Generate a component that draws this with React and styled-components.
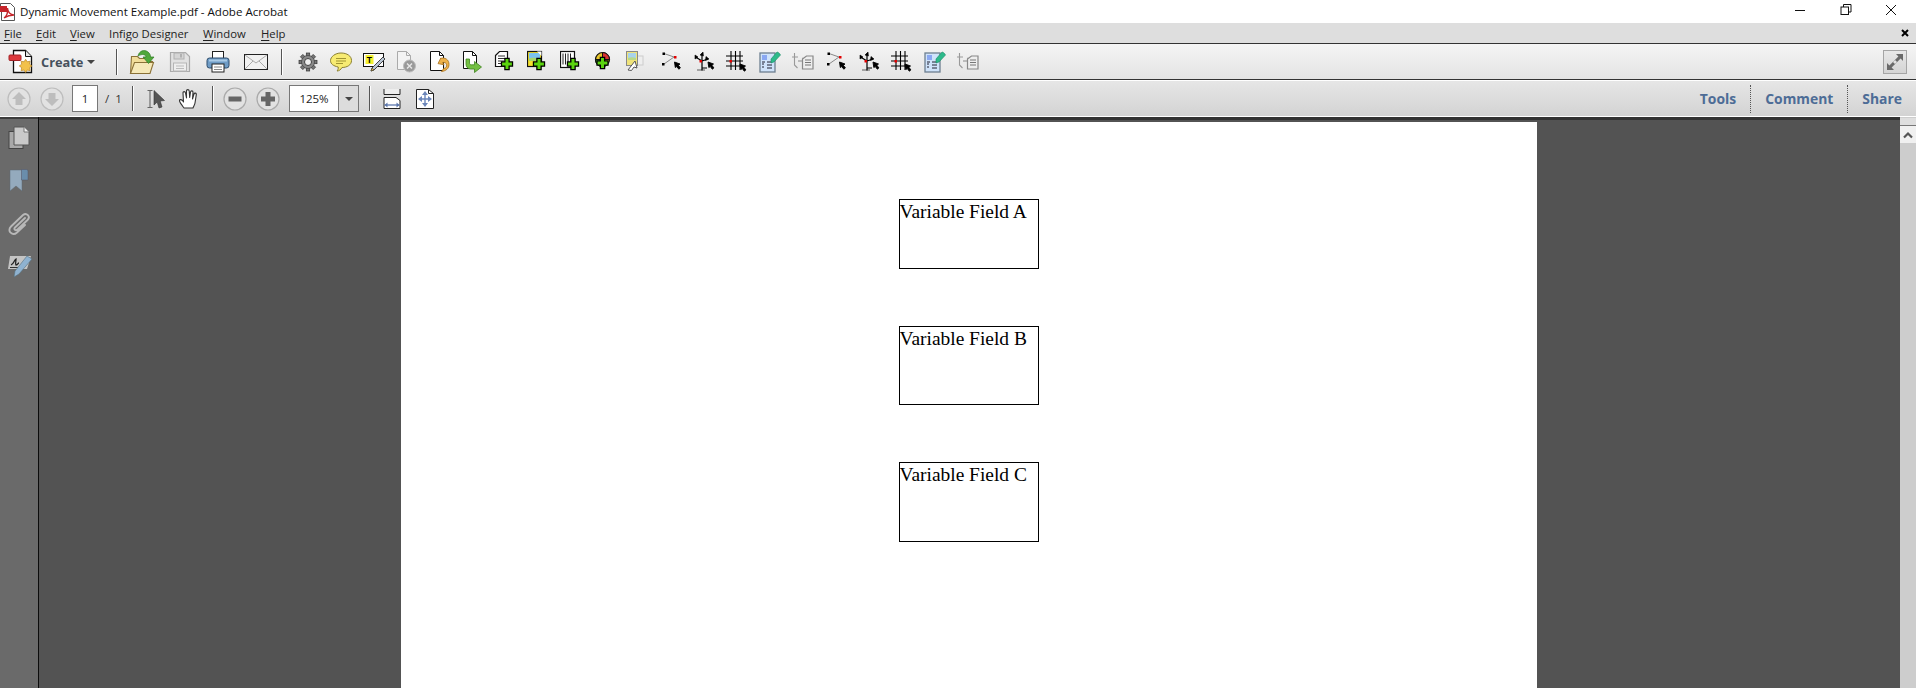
import React from "react";
import styled, { createGlobalStyle } from "styled-components";

const Global = createGlobalStyle`
  html, body { margin: 0; padding: 0; height: 100%; overflow: hidden; background: #fff; }
  #root { height: 100%; }
`;

const App_ = styled.div`
  height: 688px; width: 1916px; display: flex; flex-direction: column; overflow: hidden;
  font-family: "Open Sans", "Noto Sans", sans-serif; color: #111;
`;
const TitleBar = styled.div`
  height: 23px; background: #fff; display: flex; align-items: center; flex: none;
`;
const TitleText = styled.span`
  font-size: 11.55px; margin-left: 4px; color: #111; white-space: nowrap;
`;
const WinControls = styled.div`
  margin-left: auto; display: flex; align-items: flex-start; height: 100%;
`;
const WinButton = styled.div`
  width: 45.5px; height: 20px; display: flex; align-items: center; justify-content: center;
`;
const WinEnd = styled.div`
  width: 2px;
`;
const MenuBar = styled.div`
  height: 20px; background: #dedede; display: flex; align-items: center; flex: none; padding-left: 4px;
`;
const MenuItem = styled.span`
  font-size: 11.3px; color: #222; width: ${(p) => p.$w}px; white-space: nowrap;
  & u { text-underline-offset: 2px; }
`;
const MenuClose = styled.div`
  margin-left: auto; margin-right: 7px; display: flex;
`;
const MainBar = styled.div`
  height: 34px; padding-top: 1px; flex: none; display: flex; align-items: center; padding-left: 7px;
  border-top: 1px solid #333; border-bottom: 1px solid #333;
  background: linear-gradient(#f5f5f5, #e3e3e3);
`;
const NavBar = styled.div`
  height: 35px; flex: none; display: flex; align-items: center; padding-left: 7px;
  border-top: 1px solid #fff; border-bottom: 1px solid #fff;
  background: linear-gradient(#e6e6e6, #d3d3d3);
`;
const CreateButton = styled.div`
  width: 109px; display: flex; align-items: center;
`;
const CreateLabel = styled.span`
  font-size: 12.8px; font-weight: 700; color: #46505c; margin-left: 8px; width: 46px;
`;
const Sep = styled.div`
  width: 1px; height: ${(p) => p.$h || 26}px; background: #555; flex: none;
  margin-left: ${(p) => p.$ml || 0}px; margin-right: ${(p) => p.$mr || 0}px;
  box-shadow: 1px 0 0 #fff;
`;
const Slot = styled.div`
  width: ${(p) => p.$w}px; flex: none; display: flex; align-items: center; justify-content: center;
  margin-left: ${(p) => p.$ml || 0}px;
`;
const Ico = styled.svg`
  flex: none; display: block;
`;
const PageInput = styled.div`
  width: 24px; height: 25px; background: #fff; border: 1px solid #777;
  font-size: 11.5px; display: flex; align-items: center; justify-content: center; color: #222; flex: none;
  margin-left: 8px;
`;
const PageCount = styled.span`
  font-size: 11.5px; color: #333; width: 34px; flex: none; padding-left: 7px; box-sizing: border-box; white-space: pre;
`;
const Zoom = styled.div`
  width: 68px; height: 25px; border: 1px solid #777; display: flex; flex: none; margin-left: 9px; background: #fff;
`;
const ZoomValue = styled.div`
  width: 48px; font-size: 11.5px; display: flex; align-items: center; justify-content: center; color: #222;
`;
const ZoomArrow = styled.div`
  flex: 1; background: #dcdcdc; border-left: 1px solid #777; display: flex; align-items: center; justify-content: center;
`;
const Caret = styled.span`
  display: inline-block; border-left: 4px solid transparent; border-right: 4px solid transparent;
  border-top: 4px solid #444;
`;
const RightTabs = styled.div`
  margin-left: auto; display: flex; align-items: center; height: 100%;
`;
const Tab = styled.span`
  font-size: 13.9px; font-weight: 700; color: #4d6c96; display: flex; align-items: center; height: 28px;
  padding: 0 14px; white-space: nowrap;
  border-left: ${(p) => (p.$first ? "none" : "1px dotted #555")};
`;
const Expand = styled.div`
  margin-left: auto; margin-right: 9px; width: 22px; height: 22px; border: 1px solid #a5a5a5;
  background: linear-gradient(#e8e8e8, #d4d4d4); display: flex; align-items: center; justify-content: center;
`;
const Main = styled.div`
  flex: 1; display: flex; min-height: 0;
`;
const Sidebar = styled.div`
  width: 38px; flex: none; background: #6a6a6a; border-right: 1px solid #0c0c0c;
  display: flex; flex-direction: column; align-items: center; padding-top: 9px; gap: 18px;
  box-shadow: inset 0 2px 0 #3c3c3c;
`;
const Viewer = styled.div`
  flex: 1; background: #535353; box-shadow: inset 0 3px 0 #333; padding: 5px 2px 0 0; display: flex;
  justify-content: center; overflow: hidden;
`;
const Page = styled.div`
  width: 1136px; background: #fff; display: flex; flex-direction: column; align-items: center;
  padding-top: 77px; box-sizing: border-box; height: 600px; flex: none;
`;
const Field = styled.div`
  width: 140px; height: ${(p) => p.$h}px; box-sizing: border-box; border: 1px solid #000; flex: none;
  margin-bottom: 57px; font-family: "Liberation Serif", serif; font-size: 19.45px; line-height: 23px;
  color: #000; white-space: nowrap;
`;
const Scrollbar = styled.div`
  width: 16px; flex: none; background: #cdcdcd; display: flex; flex-direction: column;
`;
const ScrollCap = styled.div`
  height: 7px; background: #dedede; border-bottom: 1px solid #777; margin-top: 1px;
`;
const ScrollButton = styled.div`
  height: 17px; background: #f0f0f0; display: flex; align-items: center; justify-content: center;
`;

const I = ({ s = 24, dx = 0, children }) => (
  <Ico width={s} height={s} viewBox={`${-dx} 0 ${s} ${s}`}>{children}</Ico>
);

const Plus = ({ x = 14, y = 14 }) => (
  <path transform={`translate(${x} ${y}) scale(.85)`} d="M-2.500-6.500h5v4h4v5h-4v4h-5v-4h-4v-5h4z" fill="#5bd40f" stroke="#000" strokeWidth="1.500" />
);
const Cur = ({ x, y }) => (
  <path transform={`translate(${x} ${y})`} d="M0 0l5.500 2-1.600 1.300 2 2.600-1.600 1.300-2-2.600L.8 5.500z" fill="#000" stroke="#000" strokeWidth=".9" />
);

const PdfLogo = () => (
  <Ico width="16" height="18" viewBox="0 0 16 18">
    <path d="M.5 3.500V.5h10l4 4v13H1.500V9" fill="#fff" stroke="#555" />
    <rect x="0" y="3" width="7" height="6" fill="#c5252b" />
    <path d="M4 15c3-2 4-6 3.500-10 0 4 3 7 6.500 7-4 0-7 1-10 3z" fill="none" stroke="#c5252b" strokeWidth="1.400" />
  </Ico>
);
const MinGlyph = () => <Ico width="12" height="12" viewBox="0 0 12 12"><path d="M1 6.500h10" stroke="#111" /></Ico>;
const RestoreGlyph = () => (
  <Ico width="12" height="12" viewBox="0 0 12 12">
    <path d="M3.500 3V.5h7.500v7.500H8.500" fill="none" stroke="#111" />
    <rect x="1" y="3" width="7.500" height="7.500" fill="none" stroke="#111" />
  </Ico>
);
const CloseGlyph = () => <Ico width="12" height="12" viewBox="0 0 12 12"><path d="M1 1l10 10M11 1L1 11" stroke="#111" /></Ico>;
const SmallX = () => <Ico width="8" height="8" viewBox="0 0 8 8"><path d="M1 1l6 6M7 1L1 7" stroke="#000" strokeWidth="2" /></Ico>;

const CreateIcon = () => (
  <I s={26}>
    <path d="M6.500 1.500h12l6 6v16h-18z" fill="#fff" stroke="#111" strokeWidth="1.300" />
    <path d="M18.500 1.500v6h6" fill="#e5e5e5" stroke="#111" />
    <rect x="2" y="6" width="12" height="5.500" rx="1" fill="#dd3a3e" stroke="#a42226" />
    <path d="M19 12l1.600 2.600 3-.6-.6 3 2.500 1.800-2.500 1.800.6 3-3-.6-1.600 2.600-1.600-2.600-3 .6.600-3-2.500-1.800 2.500-1.800-.6-3 3 .6z" fill="#f2c14a" stroke="#b98322" strokeWidth=".7" transform="translate(0 -1.500) scale(.98)" />
  </I>
);
const OpenIcon = () => (
  <I s={26}>
    <path d="M1.500 24.500l1-17h6l2 2h8v3h5l-3 12z" fill="#f1dd9a" stroke="#8b7238" strokeWidth="1.100" />
    <path d="M1.500 24.500l4-11h19l-3.500 11z" fill="#f6e9b8" stroke="#8b7238" strokeWidth="1.100" />
    <path d="M9 7c1-5 6-7 10-4 2 1.500 2.500 3.500 2.500 5H25l-5.500 6.500L14 8h3c0-2.500-4-3.500-8-1z" fill="#4fa83a" stroke="#2f7d22" strokeWidth=".7" />
  </I>
);
const SaveIcon = () => (
  <I s={22}>
    <path d="M1.500 1.500h15l4 4v15h-19z" fill="#e2e2e2" stroke="#aaa" strokeWidth="1.200" />
    <rect x="5" y="2" width="10" height="6" fill="#d5d5d5" stroke="#b0b0b0" />
    <rect x="11" y="3" width="2" height="3.500" fill="#b0b0b0" />
    <rect x="4.500" y="12" width="13" height="8" fill="#eee" stroke="#b5b5b5" />
    <path d="M7 15h8M7 17.500h8" stroke="#bbb" />
  </I>
);
const PrintIcon = () => (
  <I s={24}>
    <rect x="6.500" y="1.500" width="11" height="8" fill="#fff" stroke="#222" />
    <rect x="1" y="8" width="22" height="10" rx="2.500" fill="#6f9cc6" stroke="#2e4d6c" />
    <rect x="3" y="9.500" width="18" height="2" fill="#a9cae6" />
    <rect x="6" y="14" width="12" height="8" fill="#fff" stroke="#222" />
    <path d="M8 17h8M8 19.500h8" stroke="#888" />
  </I>
);
const MailIcon = () => (
  <I s={26}>
    <rect x="1.500" y="5.500" width="23" height="15" fill="#f1f1f1" stroke="#222" />
    <path d="M2 6l11 8 11-8M2 20l8-8M24 20l-8-8" fill="none" stroke="#aaa" />
  </I>
);
const Gear = () => {
  const teeth = [0, 45, 90, 135, 180, 225, 270, 315];
  return (
    <I>
      {teeth.map((a) => (
        <rect key={a} x="10.300" y="3" width="3.400" height="4" fill="#777" stroke="#333" strokeWidth=".7" transform={`rotate(${a} 12 12)`} />
      ))}
      <circle cx="12" cy="12" r="6.500" fill="#8a8a8a" stroke="#444" strokeWidth=".8" />
      <circle cx="12" cy="12" r="3.500" fill="#f0f0f0" stroke="#333" strokeWidth=".9" />
    </I>
  );
};
const CommentIcon = () => (
  <I>
    <path d="M12 3c6 0 10.500 3 10.500 7.500S18 17.500 13 17.500c-1 2-3 3.500-5 3.500 1-1 1.500-2.500 1.200-4C4.500 16 1.500 14 1.500 10.500S6 3 12 3z" fill="#f7eb72" stroke="#8b8030" />
    <path d="M7 8.500h10M7 11h10M7 13.500h7" stroke="#a19532" />
  </I>
);
const NoteIcon = () => (
  <I>
    <rect x="1.500" y="3.500" width="20" height="13" fill="#fff" stroke="#111" />
    <rect x="3.500" y="5" width="8" height="9" fill="#f4f02e" />
    <text x="4.800" y="12.500" fontSize="8.500" fontFamily="Liberation Sans" fontWeight="700" fill="#000">T</text>
    <path d="M21 7l2 2-11 11-3 1 1-3z" fill="#b9c6d4" stroke="#333" strokeWidth=".9" />
    <path d="M10 18l-1 3 3-1z" fill="#e9b93a" stroke="#333" strokeWidth=".5" />
  </I>
);
const PageX = () => (
  <I dx={-1}>
    <path d="M3.500 1.500h9l4 4v14h-13z" fill="#f3f3f3" stroke="#aaa" />
    <path d="M12.500 1.500v4h4" fill="none" stroke="#aaa" />
    <circle cx="15.500" cy="16" r="6" fill="#999" stroke="#bbb" />
    <path d="M13 13.500l5 5M18 13.500l-5 5" stroke="#e8e8e8" strokeWidth="1.400" />
  </I>
);
const PageBack = () => (
  <I dx={-1}>
    <path d="M3.500 1.500h9l4 4v15h-13z" fill="#fff" stroke="#111" />
    <path d="M12.500 1.500v4h4" fill="none" stroke="#111" />
    <path d="M13 8.500c5-1.500 9 1 9 6 0 4-3 6.500-7.500 7l2.200-3c2.200-.2 3.300-1.800 3-3.700-.3-2-2.300-2.800-4.200-2.300l1.500 2.300-6-1.200 2.500-5z" fill="#eeb24b" stroke="#a8701c" strokeWidth=".8" />
  </I>
);
const PageFwd = () => (
  <I dx={-1}>
    <path d="M3.500 1.500h9l4 4v13h-13z" fill="#fff" stroke="#111" />
    <path d="M12.500 1.500v4h4" fill="none" stroke="#111" />
    <path d="M6 10.500h3.500v4c0 1.200.8 1.800 2 1.800h3V13l7 5.500-7 5.500v-3.500h-4C7.500 20.500 6 18 6 15.500z" fill="#74c043" stroke="#3f8320" strokeWidth=".8" transform="translate(0 -1.500)" />
  </I>
);
const AddDoc = () => (
  <I dx={-1}>
    <path d="M2.500 5.500l4-4h8v15h-12z" fill="#fff" stroke="#111" strokeWidth="1.200" />
    <path d="M5 6h7M5 8.500h7M5 11h6M5 13.500h4" stroke="#333" />
    <Plus x={14} y={14} />
  </I>
);
const AddImage = () => (
  <I dx={-1}>
    <rect x="1.500" y="1.500" width="14" height="15" fill="#f5e12d" stroke="#111" strokeWidth="1.200" />
    <rect x="3" y="3" width="11" height="6" fill="#7cc3ee" />
    <path d="M3 9c3-2 6-1 11 0v2H3z" fill="#a8d66a" />
    <path d="M11 1.500h4.500V6z" fill="#fff" />
    <Plus x={13} y={14} />
  </I>
);
const AddTable = () => (
  <I dx={-1}>
    <rect x="1.500" y="1.500" width="14" height="16" fill="#fff" stroke="#111" strokeWidth="1.200" />
    <path d="M4 3.500v11M6.500 3.500v11M9 3.500v11M11.500 3.500v8" stroke="#222" />
    <Plus x={14} y={14} />
  </I>
);
const AddChart = () => (
  <I dx={-2}>
    <circle cx="11.500" cy="9.500" r="7" fill="#e8c62a" stroke="#111" strokeWidth="1.200" />
    <path d="M11.500 9.500v-7a7 7 0 0 1 7 7z" fill="#d93030" stroke="#111" />
    <path d="M11.500 9.500l5 5a7 7 0 0 1-12-5z" fill="#3fa13a" stroke="#111" />
    <Plus x={11.500} y={13} />
  </I>
);
const ImageDrag = () => (
  <I dx={-3}>
    <rect x="12" y="6" width="8" height="9" fill="#eee" stroke="#ccc" />
    <rect x="3.500" y="1.500" width="11" height="14" fill="#efe37a" stroke="#888" />
    <rect x="5" y="3" width="8" height="5" fill="#a9d3ea" />
    <path d="M5 8c3-1 5-1 8 0v2H5z" fill="#b8d988" />
    <path d="M5 20l7-9 2 7-3-1-2.500 3.500z" fill="#fff" stroke="#555" />
  </I>
);
const Lines = () => (
  <I s={24} dx={2}>
    <path d="M3 3.500l10 3.500M3 14l10-7" stroke="#888" fill="none" />
    <rect x="1.500" y="2.500" width="2.500" height="2.500" fill="#000" />
    <rect x="1" y="13" width="2.500" height="2.500" fill="#000" />
    <rect x="13" y="6" width="2.500" height="2.500" fill="#e10000" />
    <Cur x={13.500} y={12} />
  </I>
);
const Axes = () => (
  <I s={24} dx={2}>
    <path d="M8 3.500v17M8 11L1.500 7M8 11l6-2M8 18h5" stroke="#000" strokeWidth="1.200" fill="none" />
    <path d="M6 5l3-3 .4 4zM1 9V5l3 2zM12 6.500l3 2.500-3.500 1.500zM3 20h8" fill="#000" stroke="#000" strokeWidth=".6" />
    <rect x="5.500" y="10" width="2.500" height="2.500" fill="#e10000" />
    <Cur x={14} y={12} />
  </I>
);
const Grid = () => (
  <I s={24}>
    <path d="M1 6h17M1 11h17M1 16h17M6 1v19M10.500 1v19M15 1v19" stroke="#000" strokeWidth="1.100" fill="none" />
    <rect x="4.500" y="10" width="2.500" height="2.500" fill="#e10000" />
    <Cur x={15} y={14} />
  </I>
);
const FormEdit = () => (
  <I s={24}>
    <rect x="2" y="3" width="15" height="19" fill="#cfe3fa" stroke="#6d7f90" strokeWidth="1.300" />
    <rect x="4" y="5" width="5" height="5" fill="#8aa8f2" />
    <path d="M4 12h3M4 14h2M4 17h2M9 12h5M9 15h5M9 18h5" stroke="#223" />
    <path d="M13 9l6-7c1 0 3 1.500 3.500 3l-6.500 7-3 1z" fill="#2dba8b" stroke="#1d8c67" strokeWidth=".6" />
  </I>
);
const TextMove = () => (
  <I s={24}>
    <path d="M3.500 3v12l3 3M1 7h6" stroke="#999" fill="none" strokeWidth="1.100" />
    <path d="M7 10h4V7l3 4-3 4v-3H7z" fill="#bbb" />
    <path d="M11.500 9l4-3h6.500v13H11.500z" fill="#eee" stroke="#888" strokeWidth="1.200" />
    <path d="M14 10h6M14 12.500h6M14 15h6" stroke="#777" />
  </I>
);

const Round = ({ dir, dim }) => (
  <Ico width="24" height="24" viewBox="0 0 24 24">
    <circle cx="12" cy="12" r="11" fill="#e2e2e2" stroke={dim ? "#bdbdbd" : "#aaa"} strokeWidth="1.200" />
    {dir === "up" && <path d="M12 5l7 7h-3.500v6h-7v-6H5z" fill={dim ? "#bdbdbd" : "#777"} />}
    {dir === "down" && <path d="M12 19l-7-7h3.500V6h7v6H19z" fill={dim ? "#bdbdbd" : "#777"} />}
    {dir === "minus" && <rect x="5.500" y="9.500" width="13" height="5" fill="#666" />}
    {dir === "plus" && <path d="M9.500 5h5v4.500H19v5h-4.500V19h-5v-4.500H5v-5h4.500z" fill="#666" />}
  </Ico>
);
const SelectIcon = () => (
  <I s={20}>
    <path d="M.5 1.500h5M.5 18.500h5M3 1.500v17" stroke="#666" strokeWidth="1.100" fill="none" />
    <path d="M7 1.500l10.500 10-4.300.5 1.800 6-3 1-1.800-6L7 16z" fill="#555" stroke="#333" strokeWidth=".6" />
  </I>
);
const HandIcon = () => (
  <I s={21}>
    <path d="M5 20c-1.500-2-4-5-4.500-7-.3-1.500 1.500-2 3-.5l1 1.500L4 5c0-1.800 2.200-1.800 2.500 0l1 5V3c0-1.800 2.500-1.800 2.700 0l.5 6.500L11.500 4c.3-1.700 2.500-1.500 2.500.3L13.500 11l1.500-5c.5-1.500 2.500-1 2.300.7L16 15c-.3 2-1.500 3.500-2 5z" fill="#fff" stroke="#333" strokeWidth="1.100" strokeLinejoin="round" />
  </I>
);
const FitWidth = () => (
  <I>
    <path d="M4 2v5.500h16V2" fill="#eee" stroke="#222" />
    <path d="M4 10.500h12l4 3v8H4z" fill="#fff" stroke="#222" />
    <path d="M4.500 18h15" stroke="#5d78ad" strokeWidth="1.300" />
    <path d="M4.500 18l3-2.500v5zM19.500 18l-3-2.500v5z" fill="#5d78ad" />
  </I>
);
const FitPage = () => (
  <I>
    <path d="M3.500 2.500h12l5 4v15h-17z" fill="#fff" stroke="#222" />
    <path d="M15.500 2.500v4h5" fill="none" stroke="#222" />
    <path d="M12 6v12M6.500 12h11" stroke="#6b86ba" strokeWidth="1.400" />
    <path d="M12 4L9 8h6zM12 20l-3-4h6zM5 12l4-3v6zM19 12l-4-3v6z" fill="#6b86ba" />
  </I>
);
const ExpandIcon = () => (
  <Ico width="20" height="20" viewBox="0 0 20 20">
    <path d="M11 2h7v7l-2.400-2.400L6.600 15.600 9 18H2v-7l2.400 2.400 9-9z" fill="#6a6a6a" />
    <path d="M9 9l2 2" stroke="#e2e2e2" strokeWidth="3" />
  </Ico>
);
const PagesIcon = () => (
  <Ico width="22" height="24" viewBox="0 0 22 24">
    <rect x="1" y="5.500" width="14" height="17" fill="#a9a9a9" stroke="#444" />
    <path d="M6 1h10l5 5v13H6z" fill="#c9c9c9" stroke="#555" />
    <path d="M16 1v5h5" fill="#eee" stroke="#777" />
  </Ico>
);
const BookmarkIcon = () => (
  <Ico width="20" height="25" viewBox="0 0 20 25">
    <path d="M1 2h12v21l-6-5-6 5z" fill="#94aabd" stroke="#5e6a74" strokeWidth=".5" />
    <path d="M12.500 1.500h5q1.500 0 1.500 1.500V12h-6.500z" fill="#6a8dab" stroke="#556" strokeWidth=".5" />
  </Ico>
);
const ClipIcon = () => (
  <Ico width="24" height="25" viewBox="0 0 24 25">
    <path d="M18 7L8 16.500c-1.800 1.800 .6 3.800 2.500 2L20.500 9c3.500-3.500-1-8-4.500-5L4 15.500c-4.500 4.500 1.500 10 6 6l8-7.500" fill="none" stroke="#b8b8b8" strokeWidth="1.900" strokeLinecap="round" />
  </Ico>
);
const SignIcon = () => (
  <Ico width="25" height="26" viewBox="0 0 25 26">
    <path d="M3 2h21l-4 13H1z" fill="#c4c4c4" />
    <path d="M4 11c3-1 3-5 5-6 0 3-1 5 0 6 2 0 2-2 3-2" fill="none" stroke="#222" strokeWidth="1.300" />
    <path d="M3 13.500h10" stroke="#333" />
    <path d="M20 2l5 3-13 15-5 3 1-6z" fill="#8fb2d0" stroke="#56707f" strokeWidth=".6" />
  </Ico>
);
const ScrollUp = () => (
  <Ico width="10" height="8" viewBox="0 0 10 8"><path d="M1 6.500l4-4 4 4" fill="none" stroke="#555" strokeWidth="2.200" /></Ico>
);

const tools = [Gear, CommentIcon, NoteIcon, PageX, PageBack, PageFwd, AddDoc, AddImage, AddTable, AddChart, ImageDrag, Lines, Axes, Grid, FormEdit, TextMove, Lines, Axes, Grid, FormEdit, TextMove];

export default function App() {
  return (
    <App_>
      <Global />
      <TitleBar>
        <PdfLogo />
        <TitleText>Dynamic Movement Example.pdf - Adobe Acrobat</TitleText>
        <WinControls>
          <WinButton><MinGlyph /></WinButton>
          <WinButton><RestoreGlyph /></WinButton>
          <WinButton><CloseGlyph /></WinButton>
          <WinEnd />
        </WinControls>
      </TitleBar>
      <MenuBar>
        <MenuItem $w={32}><u>F</u>ile</MenuItem>
        <MenuItem $w={34}><u>E</u>dit</MenuItem>
        <MenuItem $w={39}><u>V</u>iew</MenuItem>
        <MenuItem $w={94}>Infigo Designer</MenuItem>
        <MenuItem $w={58}><u>W</u>indow</MenuItem>
        <MenuItem $w={40}><u>H</u>elp</MenuItem>
        <MenuClose><SmallX /></MenuClose>
      </MenuBar>
      <MainBar>
        <CreateButton>
          <CreateIcon />
          <CreateLabel>Create</CreateLabel>
          <Caret />
        </CreateButton>
        <Sep />
        <Slot $w={38} $ml={6}><OpenIcon /></Slot>
        <Slot $w={38}><SaveIcon /></Slot>
        <Slot $w={38}><PrintIcon /></Slot>
        <Slot $w={38}><MailIcon /></Slot>
        <Sep $ml={6} $mr={9} />
        {tools.map((T, i) => (
          <Slot $w={33} key={i}><T /></Slot>
        ))}
        <Expand><ExpandIcon /></Expand>
      </MainBar>
      <NavBar>
        <Slot $w={24}><Round dir="up" dim /></Slot>
        <Slot $w={24} $ml={9}><Round dir="down" dim /></Slot>
        <PageInput>1</PageInput>
        <PageCount>/  1</PageCount>
        <Sep $h={25} />
        <Slot $w={20} $ml={14}><SelectIcon /></Slot>
        <Slot $w={22} $ml={11}><HandIcon /></Slot>
        <Sep $h={25} $ml={12} $mr={10} />
        <Slot $w={24}><Round dir="minus" /></Slot>
        <Slot $w={24} $ml={9}><Round dir="plus" /></Slot>
        <Zoom>
          <ZoomValue>125%</ZoomValue>
          <ZoomArrow><Caret /></ZoomArrow>
        </Zoom>
        <Sep $h={25} $ml={10} $mr={10} />
        <Slot $w={24}><FitWidth /></Slot>
        <Slot $w={24} $ml={9}><FitPage /></Slot>
        <RightTabs>
          <Tab $first>Tools</Tab>
          <Tab>Comment</Tab>
          <Tab>Share</Tab>
        </RightTabs>
      </NavBar>
      <Main>
        <Sidebar>
          <PagesIcon />
          <BookmarkIcon />
          <ClipIcon />
          <SignIcon />
        </Sidebar>
        <Viewer>
          <Page>
            <Field $h={70}>Variable Field A</Field>
            <Field $h={79}>Variable Field B</Field>
            <Field $h={80}>Variable Field C</Field>
          </Page>
        </Viewer>
        <Scrollbar>
          <ScrollCap />
          <ScrollButton><ScrollUp /></ScrollButton>
        </Scrollbar>
      </Main>
    </App_>
  );
}
